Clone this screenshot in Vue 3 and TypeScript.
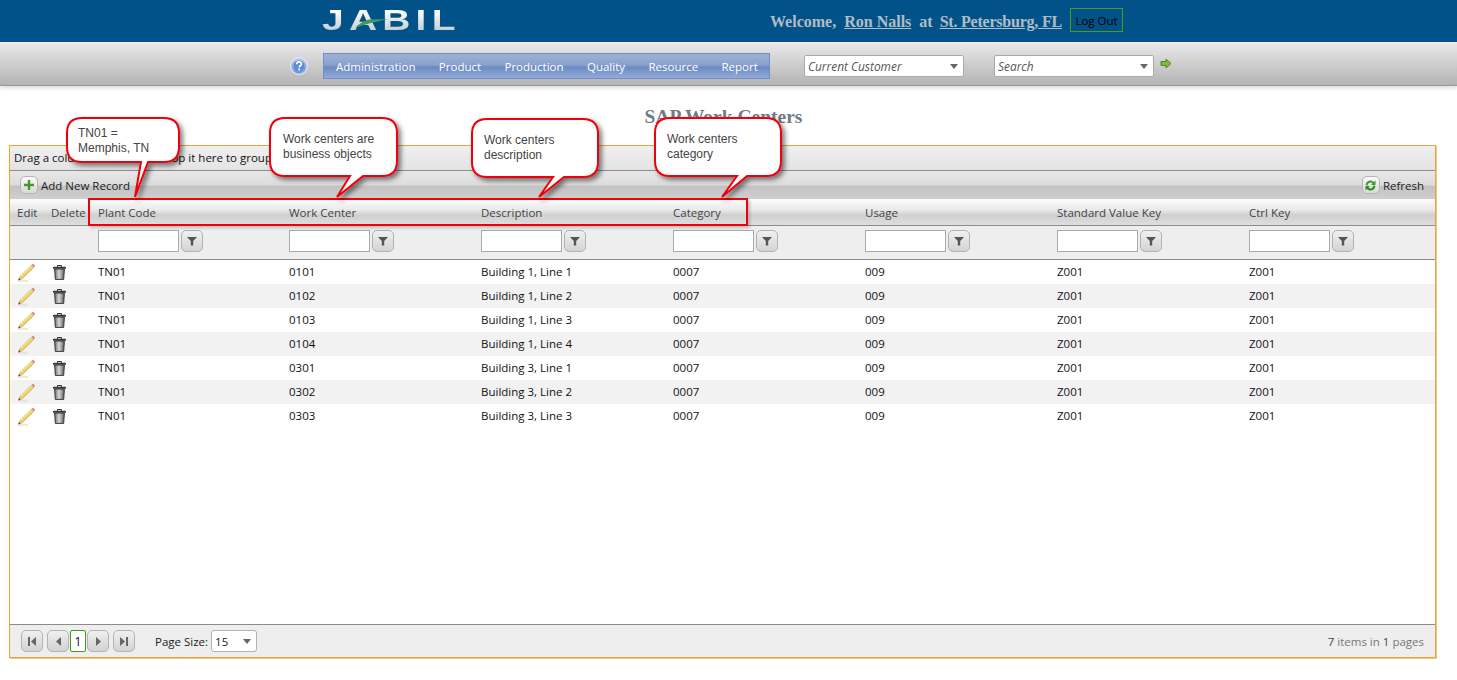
<template>
  <div class="page">
    <header class="top">
      <div class="logo">
        <span class="logo__text">JABIL</span>
        <svg class="logo__swoosh" width="34" height="12" viewBox="0 0 34 12">
          <path d="M0 10 C4 6 8 3 14 1.5 L33 1 C24 3 14 5 0 10Z" fill="#3f9a5c" />
        </svg>
      </div>
      <div class="welcome">
        Welcome,&nbsp; <a>Ron Nalls</a>&nbsp; at&nbsp; <a class="site">St. Petersburg, FL</a>
      </div>
      <button class="logout">Log Out</button>
    </header>

    <nav class="nav">
      <svg class="help" width="18" height="18" viewBox="0 0 18 18">
        <defs>
          <linearGradient id="helpFill" x1="0" y1="0" x2="0" y2="1">
            <stop offset="0" stop-color="#b9cdee" />
            <stop offset="1" stop-color="#6f97d8" />
          </linearGradient>
        </defs>
        <circle cx="9" cy="9" r="8.4" fill="url(#helpFill)" stroke="#e3e9f4" stroke-width="1.2" />
        <circle cx="9" cy="9" r="5.6" fill="#5f8bd2" />
        <path d="M6.8 7.2c0-3 4.6-3 4.6-.2 0 1.8-2.2 1.7-2.2 3.5" fill="none" stroke="#fff" stroke-width="1.7" />
        <rect x="8.3" y="11.6" width="1.8" height="1.8" fill="#fff" />
      </svg>
      <ul class="menu">
        <li v-for="item in menu" :key="item">{{ item }}</li>
      </ul>
      <div class="combo combo--customer">
        <span>Current Customer</span><i class="caret"></i>
      </div>
      <div class="combo combo--search">
        <span>Search</span><i class="caret"></i>
      </div>
      <svg class="go" width="12" height="11" viewBox="0 0 12 11">
        <path d="M1 3.5h5V1l5 4.5L6 10V7.5H1z" fill="#7dbb3c" stroke="#4d8a25" />
      </svg>
    </nav>

    <h1 class="title">SAP Work Centers</h1>

    <section class="grid">
      <div class="grouping">Drag a column header and drop it here to group by that column</div>
      <div class="toolbar">
        <div class="action">
          <span class="icon-btn">
            <svg width="10" height="10" viewBox="0 0 10 10"><path d="M3.8 0h2.4v3.8H10v2.4H6.2V10H3.8V6.2H0V3.8h3.8z" fill="#3e9a2a" /></svg>
          </span>
          Add New Record
        </div>
        <div class="action">
          <span class="icon-btn">
            <svg width="13" height="13" viewBox="0 0 13 13">
              <path d="M1.5 6A5 5 0 0 1 10 3L11.5 1.5V6H7L8.6 4.4A3 3 0 0 0 3.6 6.4z" fill="#3e9a2a" />
              <path d="M11.5 7A5 5 0 0 1 3 10L1.5 11.5V7H6L4.4 8.6A3 3 0 0 0 9.4 6.6z" fill="#2f8a22" />
            </svg>
          </span>
          Refresh
        </div>
      </div>

      <div class="cols cols--head">
        <div v-for="c in headers" :key="c">{{ c }}</div>
      </div>

      <div class="cols cols--filter">
        <div></div>
        <div></div>
        <div v-for="c in 7" :key="c" class="filter">
          <span class="filter__box"></span>
          <span class="filter__btn">
            <svg width="10" height="10" viewBox="0 0 10 10"><path d="M0 1h10L6.2 5v4.5H3.8V5z" fill="#555" /></svg>
          </span>
        </div>
      </div>

      <div class="body">
        <div v-for="(r, i) in rows" :key="r.center" class="cols cols--row" :class="{ alt: i % 2 === 1 }">
          <div class="cell-icon">
            <svg width="18" height="19" viewBox="0 0 18 19">
              <path d="M1 18h10" stroke="#d4d4d4" stroke-width="1" />
              <path d="M3 13.6L14.6 2l2.2 2.2L5.2 15.8 1.4 17.2z" fill="#efd063" stroke="#b6923a" stroke-width=".6" />
              <path d="M4 13.4L14.8 2.8" stroke="#fbf0b4" stroke-width="1" />
              <path d="M14.6 2l1-1c.3-.3.7-.3 1 0l1.2 1.2c.3.3.3.7 0 1l-1 1z" fill="#e87f8c" />
              <path d="M1.4 17.2l.7-2 1.3 1.3z" fill="#3a3a3a" />
            </svg>
          </div>
          <div class="cell-icon cell-icon--trash">
            <svg width="13" height="15" viewBox="0 0 13 15">
              <defs>
                <linearGradient :id="'can' + i" x1="0" y1="0" x2="1" y2="0">
                  <stop offset="0" stop-color="#6a6a6a" />
                  <stop offset=".45" stop-color="#d6d6d6" />
                  <stop offset="1" stop-color="#5a5a5a" />
                </linearGradient>
              </defs>
              <path d="M4.5 1.8V.6h4v1.2" fill="none" stroke="#222" />
              <rect x="0" y="1.8" width="13" height="2" rx=".5" fill="#3c3c3c" />
              <path d="M1.6 4h9.8l-.7 10.4H2.3z" :fill="'url(#can' + i + ')'" stroke="#2a2a2a" stroke-width=".9" />
            </svg>
          </div>
          <div class="cell-text">{{ r.plant }}</div>
          <div class="cell-text">{{ r.center }}</div>
          <div class="cell-text">{{ r.description }}</div>
          <div class="cell-text">{{ r.category }}</div>
          <div class="cell-text">{{ r.usage }}</div>
          <div class="cell-text">{{ r.valueKey }}</div>
          <div class="cell-text">{{ r.ctrlKey }}</div>
        </div>
      </div>

      <footer class="pager">
        <div class="pager__nav">
          <span class="page-btn page-btn--gap">
            <svg width="8" height="9" viewBox="0 0 8 9"><path d="M0 0h2v9H0zM8 0v9L3 4.5z" fill="#666" /></svg>
          </span>
          <span class="page-btn">
            <svg width="5" height="9" viewBox="0 0 5 9"><path d="M5 0v9L0 4.5z" fill="#666" /></svg>
          </span>
          <span class="page-num">1</span>
          <span class="page-btn page-btn--gap">
            <svg width="5" height="9" viewBox="0 0 5 9"><path d="M0 0v9l5-4.5z" fill="#666" /></svg>
          </span>
          <span class="page-btn">
            <svg width="8" height="9" viewBox="0 0 8 9"><path d="M8 0H6v9h2zM0 0v9l5-4.5z" fill="#666" /></svg>
          </span>
        </div>
        <span class="pager__label">Page Size:</span>
        <div class="size"><span>15</span><i class="caret"></i></div>
        <div class="pager__info"><b>7</b> items in <b>1</b> pages</div>
      </footer>

      <div class="highlight"></div>
      <div
        v-for="n in notes"
        :key="n.text"
        class="note"
        :style="{ left: n.x + 'px', top: n.y + 'px', width: n.w + 'px', height: n.h + 'px' }"
      >
        <svg class="note__shape" :width="n.w + 14" :height="n.h + 14" :viewBox="`-1 -1 ${n.w + 14} ${n.h + 14}`">
          <path :d="n.d" fill="#fff" stroke="#f00008" stroke-width="2" filter="url(#noteShadow)" />
          <defs>
            <filter id="noteShadow" x="-10%" y="-10%" width="130%" height="130%">
              <feDropShadow dx="3" dy="3" stdDeviation="2.5" flood-color="#000" flood-opacity=".5" />
            </filter>
          </defs>
        </svg>
        <div class="note__text" :style="{ paddingLeft: n.px + 'px', paddingTop: n.py + 'px' }">{{ n.text }}</div>
      </div>
    </section>
  </div>
</template>

<script setup lang="ts">
interface Row {
  plant: string
  center: string
  description: string
  category: string
  usage: string
  valueKey: string
  ctrlKey: string
}

const menu = ['Administration', 'Product', 'Production', 'Quality', 'Resource', 'Report']
const headers = ['Edit', 'Delete', 'Plant Code', 'Work Center', 'Description', 'Category', 'Usage', 'Standard Value Key', 'Ctrl Key']

const rows: Row[] = [
  ['0101', 'Building 1, Line 1'],
  ['0102', 'Building 1, Line 2'],
  ['0103', 'Building 1, Line 3'],
  ['0104', 'Building 1, Line 4'],
  ['0301', 'Building 3, Line 1'],
  ['0302', 'Building 3, Line 2'],
  ['0303', 'Building 3, Line 3'],
].map(([center, description]) => ({
  plant: 'TN01',
  center,
  description,
  category: '0007',
  usage: '009',
  valueKey: 'Z001',
  ctrlKey: 'Z001',
}))

// w/h are the balloon body, tail is [base start, base end, tip x, tip y] relative to it
function balloon(w: number, h: number, tail: [number, number, number, number]) {
  const r = 15
  const [a, b, tx, ty] = tail
  return `M${r} 0H${w - r}Q${w} 0 ${w} ${r}V${h - r}Q${w} ${h} ${w - r} ${h}H${b}L${tx} ${ty}L${a} ${h}H${r}Q0 ${h} 0 ${h - r}V${r}Q0 0 ${r} 0Z`
}

// offsets are relative to the grid panel's padding box, at 10,146
const notes = [
  { text: 'TN01 =\nMemphis, TN', x: 57, y: -28, w: 112, h: 44, px: 11, py: 8, d: balloon(112, 44, [74, 81, 68, 79]) },
  { text: 'Work centers are\nbusiness objects', x: 260, y: -28, w: 127, h: 58, px: 13, py: 14, d: balloon(127, 58, [80, 93, 67, 79]) },
  { text: 'Work centers\ndescription', x: 462, y: -27, w: 126, h: 58, px: 12, py: 14, d: balloon(126, 58, [81, 92, 67, 78]) },
  { text: 'Work centers\ncategory', x: 645, y: -28, w: 126, h: 58, px: 12, py: 14, d: balloon(126, 58, [82, 92, 67, 79]) },
]
</script>

<style>
html,
body {
  margin: 0;
  background: #fff;
  overflow: hidden;
}
</style>

<style scoped>
.page {
  height: 680px;
  display: flex;
  flex-direction: column;
  font-family: 'Open Sans', 'Noto Sans', sans-serif;
  font-size: 11.5px;
  color: #222;
}

.top {
  height: 42px;
  flex: none;
  display: flex;
  align-items: flex-start;
  background: #02528a;
}

.logo {
  position: relative;
  margin: 2px 0 0 322px;
  width: 135px;
  height: 36px;
}

.logo__text {
  display: inline-block;
  font-family: 'Liberation Sans', sans-serif;
  font-weight: 700;
  font-size: 30px;
  line-height: 36px;
  letter-spacing: 4px;
  transform: scaleX(1.3);
  transform-origin: left;
  background: linear-gradient(180deg, #fff 25%, #c4ccd3 80%);
  -webkit-background-clip: text;
  background-clip: text;
  color: transparent;
}

.logo__swoosh {
  position: absolute;
  left: 33px;
  top: 16px;
}

.welcome {
  margin: 13px 0 0 313px;
  width: 300px;
  font-family: 'Liberation Serif', serif;
  font-weight: 700;
  font-size: 16px;
  line-height: 18px;
  color: #b2bcc2;
  white-space: nowrap;
}

.welcome a {
  text-decoration: underline;
}

.welcome .site {
  letter-spacing: -0.22px;
  margin-left: -1px;
}

.logout {
  margin: 8px 0 0;
  width: 53px;
  height: 24px;
  padding: 0;
  border: 1px solid #4d9a22;
  background: transparent;
  color: #000;
  font-family: inherit;
  font-size: 11.5px;
}

.nav {
  height: 44px;
  flex: none;
  box-sizing: border-box;
  display: flex;
  align-items: flex-start;
  padding: 0 0 0 290px;
  background: linear-gradient(180deg, #e9e9e9, #b3b3b3);
  border-top: 1px solid #eee;
  border-bottom: 1px solid #999;
  box-shadow: 0 2px 4px rgba(0, 0, 0, 0.15);
}

.help {
  margin-top: 14px;
}

.menu {
  list-style: none;
  margin: 10px 0 0 15px;
  padding: 0 12px;
  width: 447px;
  height: 26px;
  box-sizing: border-box;
  display: flex;
  gap: 23.4px;
  align-items: center;
  border: 1px solid #6f8fcb;
  background: linear-gradient(180deg, #9fb2d6 0%, #8aa1cd 45%, #6c8ac2 55%, #92aad9 100%);
  color: #fff;
}

.combo {
  margin-top: 12px;
  width: 160px;
  height: 22px;
  box-sizing: border-box;
  display: flex;
  align-items: center;
  justify-content: space-between;
  padding: 0 5px 0 3px;
  background: #fff;
  border: 1px solid #aaa;
  border-radius: 2px;
  font-size: 11.9px;
  font-style: italic;
  color: #555;
}

.combo--customer {
  margin-left: 34px;
}

.combo--search {
  margin-left: 30px;
}

.caret {
  width: 0;
  height: 0;
  border-left: 4px solid transparent;
  border-right: 4px solid transparent;
  border-top: 5px solid #666;
}

.go {
  margin: 15px 0 0 6px;
}

.title {
  margin: 22px 0 0;
  padding-right: 10px;
  height: 23px;
  flex: none;
  font-family: 'Liberation Serif', serif;
  font-size: 19.5px;
  line-height: 18px;
  font-weight: 700;
  text-align: center;
  color: #6f7b85;
}

.grid {
  position: relative;
  flex: none;
  margin: 14px 0 0 9px;
  width: 1427px;
  height: 513px;
  box-sizing: border-box;
  display: flex;
  flex-direction: column;
  border: 1px solid #e5a63e;
  box-shadow: 1px 1px 0 #f0c67e;
}

.grouping {
  height: 25px;
  flex: none;
  box-sizing: border-box;
  padding: 4px 0 0 4px;
  line-height: 16px;
  background: linear-gradient(180deg, #f0f0f0, #e4e4e4);
  border-bottom: 1px solid #8c8c8c;
  color: #111;
}

.toolbar {
  height: 28px;
  flex: none;
  box-sizing: border-box;
  display: flex;
  justify-content: space-between;
  align-items: center;
  padding: 0 11px 0 10px;
  background: linear-gradient(180deg, #e8e8e8 0%, #dcdcdc 50%, #c3c3c3 54%, #cfcfcf 100%);
}

.action {
  display: flex;
  align-items: center;
  gap: 3px;
}

.icon-btn {
  width: 16px;
  height: 16px;
  display: flex;
  align-items: center;
  justify-content: center;
  border: 1px solid #b5b5b5;
  border-radius: 5px;
  background: linear-gradient(180deg, #fafafa, #d8d8d8);
}

.cols {
  display: grid;
  grid-template-columns: 34px 47px 191px repeat(5, 192px) 1fr;
  align-items: center;
}

.cols > div {
  padding-left: 7px;
  white-space: nowrap;
}

.cols--head {
  height: 27px;
  flex: none;
  box-sizing: border-box;
  border-bottom: 1px solid #8c8c8c;
  background: linear-gradient(180deg, #fcfcfc 0%, #e9e9e9 42%, #d0d0d0 62%, #dedede 100%);
  color: #444;
}

.cols--filter {
  height: 34px;
  flex: none;
  box-sizing: border-box;
  align-items: start;
  padding-top: 4px;
  background: #eee;
  border-bottom: 1px solid #8c8c8c;
}

.filter {
  display: flex;
  align-items: center;
  gap: 2px;
}

.filter__box {
  width: 79px;
  height: 20px;
  background: #fff;
  border: 1px solid #aaa;
}

.filter__btn {
  width: 20px;
  height: 20px;
  display: flex;
  align-items: center;
  justify-content: center;
  border: 1px solid #b3b3b3;
  border-radius: 5px;
  background: linear-gradient(180deg, #f0f0f0, #d4d4d4);
}

.body {
  flex: 1;
  min-height: 0;
  background: #fff;
}

.cols--row {
  height: 24px;
  color: #111;
}

.cols--row.alt {
  background: #f2f2f2;
}

.cell-text {
  padding-bottom: 2px;
}

.cell-icon {
  display: flex;
  align-items: center;
}

.cols > .cell-icon--trash {
  padding-left: 9px;
}

.pager {
  height: 33px;
  flex: none;
  box-sizing: border-box;
  display: flex;
  align-items: center;
  padding: 0 11px;
  background: #eee;
  border-top: 1px solid #8c8c8c;
}

.pager__nav {
  display: flex;
  align-items: center;
}

.page-btn,
.page-num {
  height: 22px;
  box-sizing: border-box;
  display: flex;
  align-items: center;
  justify-content: center;
  border-radius: 5px;
}

.page-btn {
  width: 22px;
  border: 1px solid #b3b3b3;
  background: linear-gradient(180deg, #f0f0f0, #d2d2d2);
}

.page-btn--gap {
  margin-right: 4px;
}

.page-num {
  width: 16px;
  margin: 0 1px;
  border: 1px solid #3c9a1e;
  border-radius: 2px;
  background: #fff;
  color: #111;
  font-size: 12px;
}

.pager__label {
  margin-left: 20px;
}

.size {
  margin-left: 3px;
  width: 46px;
  height: 22px;
  box-sizing: border-box;
  display: flex;
  align-items: center;
  justify-content: space-between;
  padding: 0 5px 0 3px;
  background: #fff;
  border: 1px solid #b3b3b3;
  border-radius: 3px;
}

.pager__info {
  margin-left: auto;
  color: #777;
}

.pager__info b {
  font-weight: 400;
  color: #444;
}

.highlight {
  position: absolute;
  left: 78px;
  top: 52px;
  width: 656px;
  height: 24px;
  border: 2px solid #f00008;
  box-shadow: 2px 2px 3px rgba(0, 0, 0, 0.2);
}

.note {
  position: absolute;
}

.note__shape {
  position: absolute;
  left: -1px;
  top: -1px;
  overflow: visible;
}

.note__text {
  position: relative;
  font-family: 'Liberation Sans', Arial, sans-serif;
  font-size: 12px;
  line-height: 15px;
  color: #444;
  white-space: pre-line;
}
</style>
